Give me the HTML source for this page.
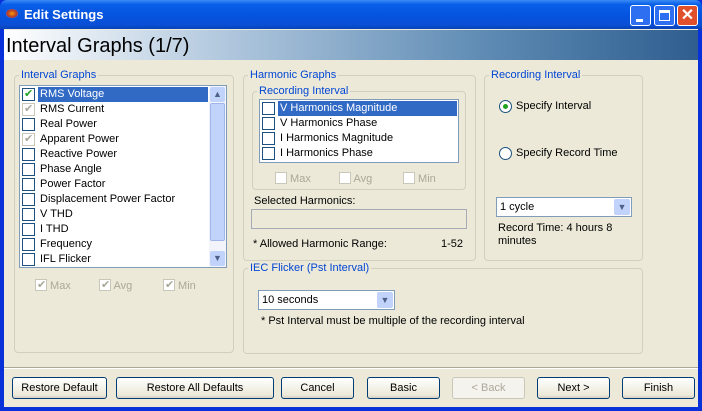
<!DOCTYPE html>
<html><head><style>
*{box-sizing:border-box;margin:0;padding:0}
body{width:702px;height:411px;overflow:hidden;font-family:"Liberation Sans",sans-serif;font-size:11px;background:#0831d9;position:relative}
.a{position:absolute}
.win{left:4px;top:29px;width:694px;height:378px;background:#ece9d8}
.title{left:0;top:0;width:702px;height:29px;background:linear-gradient(#3b8cf5 0%,#0a5fe8 15%,#0554e0 50%,#0a4fd6 85%,#0842b8 100%);border-radius:7px 7px 0 0}
.hdr{left:4px;top:30px;width:694px;height:30px;background:linear-gradient(90deg,#fff 0%,#a9c2da 35%,#5d8ab3 70%,#2f5e8f 100%);font-size:20px;padding:5px 0 0 2px}
.gb{position:absolute;border:1px solid #d0d0bf;border-radius:4px}
.gl{position:absolute;background:#ece9d8;color:#0046d5;padding:0 2px;top:-7px;left:4px;line-height:13px}
.list{position:absolute;background:#fff;border:1px solid #7f9db9}
.row{height:15px;line-height:15px;position:relative;padding-left:18px;white-space:nowrap}
.cb{position:absolute;left:2px;top:1px;width:13px;height:13px;border:1px solid #1c5180;background:#fff}
.cb.dis{border-color:#c9c7ba}
.sel{background:#316ac5;color:#fff}
.btn{position:absolute;top:377px;height:22px;border:1px solid #003c74;border-radius:3px;background:linear-gradient(#fff,#ece9d8 85%,#d6d0c5);text-align:center;line-height:20px}
.tick{color:#21a121;font-size:11px;position:absolute;left:1px;top:-2px}
.g{color:#aca899}
.combo{position:absolute;background:#fff;border:1px solid #7f9db9;height:20px;line-height:18px;padding-left:3px}
.dd{position:absolute;right:1px;top:1px;width:16px;height:16px;background:#c1d3fb;border-radius:2px;color:#4d6185;font-size:9px;text-align:center;line-height:16px}
</style></head><body>
<div class="a title"></div>
<div class="a" style="left:6px;top:9px;width:12px;height:9px;border-radius:50%;background:radial-gradient(#f90,#a33 60%,#fff)"></div>
<div class="a" style="left:24px;top:7px;color:#fff;font-weight:bold;font-size:13px">Edit Settings</div>
<div class="a" style="left:630px;top:5px;width:21px;height:21px;border:1px solid #fff;border-radius:3px;background:#2d6ff0"><div class="a" style="left:5px;top:13px;width:7px;height:3px;background:#fff"></div></div>
<div class="a" style="left:654px;top:5px;width:21px;height:21px;border:1px solid #fff;border-radius:3px;background:#2d6ff0"><div class="a" style="left:4px;top:4px;width:11px;height:11px;border:1px solid #fff;border-top-width:3px"></div></div>
<div class="a" style="left:677px;top:5px;width:21px;height:21px;border:1px solid #fff;border-radius:3px;background:#e0502a;color:#fff;font-size:16px;text-align:center;line-height:19px;font-weight:bold">✕</div>
<div class="a win"></div>
<div class="a hdr">Interval Graphs (1/7)</div>

<div class="gb" style="left:14px;top:75px;width:220px;height:278px"><span class="gl">Interval Graphs</span></div>
<div class="list" style="left:19px;top:85px;width:208px;height:183px">
<div style="position:absolute;left:0;top:1px;width:188px">
<div class="row"><span class="cb"><span class="tick">✔</span></span><span class="sel" style="display:block;margin-left:0;padding-left:2px">RMS Voltage</span></div>
<div class="row" style="padding-left:20px"><span class="cb dis"><span class="tick g">✔</span></span>RMS Current</div>
<div class="row" style="padding-left:20px"><span class="cb"></span>Real Power</div>
<div class="row" style="padding-left:20px"><span class="cb dis"><span class="tick g">✔</span></span>Apparent Power</div>
<div class="row" style="padding-left:20px"><span class="cb"></span>Reactive Power</div>
<div class="row" style="padding-left:20px"><span class="cb"></span>Phase Angle</div>
<div class="row" style="padding-left:20px"><span class="cb"></span>Power Factor</div>
<div class="row" style="padding-left:20px"><span class="cb"></span>Displacement Power Factor</div>
<div class="row" style="padding-left:20px"><span class="cb"></span>V THD</div>
<div class="row" style="padding-left:20px"><span class="cb"></span>I THD</div>
<div class="row" style="padding-left:20px"><span class="cb"></span>Frequency</div>
<div class="row" style="padding-left:20px"><span class="cb"></span>IFL Flicker</div>
</div>
<div class="a" style="right:0;top:0;width:17px;height:181px;background:#f3f4fb"></div>
<div class="a" style="right:1px;top:1px;width:15px;height:15px;background:#c1d3fb;border-radius:2px;color:#4d6185;font-size:9px;text-align:center;line-height:15px">▲</div>
<div class="a" style="right:1px;top:17px;width:15px;height:138px;background:#c1d3fb;border:1px solid #a0b6e8;border-radius:2px"></div>
<div class="a" style="right:1px;bottom:1px;width:15px;height:15px;background:#c1d3fb;border-radius:2px;color:#4d6185;font-size:9px;text-align:center;line-height:15px">▼</div>
</div>
<div class="a g" style="left:35px;top:277px"><span class="cb dis" style="position:relative;display:inline-block;left:0;top:2px;width:12px;height:12px"><span class="tick g">✔</span></span> Max</div>
<div class="a g" style="left:99px;top:277px"><span class="cb dis" style="position:relative;display:inline-block;left:0;top:2px;width:12px;height:12px"><span class="tick g">✔</span></span> Avg</div>
<div class="a g" style="left:163px;top:277px"><span class="cb dis" style="position:relative;display:inline-block;left:0;top:2px;width:12px;height:12px"><span class="tick g">✔</span></span> Min</div>

<div class="gb" style="left:243px;top:75px;width:233px;height:186px"><span class="gl">Harmonic Graphs</span></div>
<div class="gb" style="left:252px;top:91px;width:214px;height:99px"><span class="gl">Recording Interval</span></div>
<div class="list" style="left:259px;top:99px;width:200px;height:64px;padding-top:1px">
<div class="row" style="padding-left:18px"><span class="cb"></span><span class="sel" style="display:block;padding-left:2px;margin-right:1px">V Harmonics Magnitude</span></div>
<div class="row" style="padding-left:20px"><span class="cb"></span>V Harmonics Phase</div>
<div class="row" style="padding-left:20px"><span class="cb"></span>I Harmonics Magnitude</div>
<div class="row" style="padding-left:20px"><span class="cb"></span>I Harmonics Phase</div>
</div>
<div class="a g" style="left:275px;top:170px"><span class="cb dis" style="position:relative;display:inline-block;left:0;top:2px;width:12px;height:12px"></span> Max</div>
<div class="a g" style="left:339px;top:170px"><span class="cb dis" style="position:relative;display:inline-block;left:0;top:2px;width:12px;height:12px"></span> Avg</div>
<div class="a g" style="left:403px;top:170px"><span class="cb dis" style="position:relative;display:inline-block;left:0;top:2px;width:12px;height:12px"></span> Min</div>
<div class="a" style="left:254px;top:195px">Selected Harmonics:</div>
<div class="a" style="left:251px;top:209px;width:216px;height:20px;border:1px solid #a5acb5;background:#ece9d8"></div>
<div class="a" style="left:253px;top:238px">* Allowed Harmonic Range:</div>
<div class="a" style="left:441px;top:238px">1-52</div>

<div class="gb" style="left:484px;top:75px;width:159px;height:186px"><span class="gl">Recording Interval</span></div>
<div class="a" style="left:499px;top:100px;width:13px;height:13px;border-radius:50%;border:1px solid #1c5180;background:#fff"><div class="a" style="left:3px;top:3px;width:5px;height:5px;border-radius:50%;background:#21a121"></div></div>
<div class="a" style="left:516px;top:100px">Specify Interval</div>
<div class="a" style="left:499px;top:147px;width:13px;height:13px;border-radius:50%;border:1px solid #1c5180;background:#fff"></div>
<div class="a" style="left:516px;top:147px">Specify Record Time</div>
<div class="combo" style="left:496px;top:197px;width:136px">1 cycle<div class="dd">▼</div></div>
<div class="a" style="left:498px;top:222px;line-height:13px">Record Time: 4 hours 8<br>minutes</div>

<div class="gb" style="left:243px;top:268px;width:400px;height:86px"><span class="gl">IEC Flicker (Pst Interval)</span></div>
<div class="combo" style="left:258px;top:290px;width:137px">10 seconds<div class="dd">▼</div></div>
<div class="a" style="left:261px;top:315px">* Pst Interval must be multiple of the recording interval</div>

<div class="a" style="left:4px;top:367px;width:694px;height:1px;background:#aca899"></div>
<div class="a" style="left:4px;top:368px;width:694px;height:1px;background:#fff"></div>
<div class="btn" style="left:12px;width:95px">Restore Default</div>
<div class="btn" style="left:116px;width:158px">Restore All Defaults</div>
<div class="btn" style="left:281px;width:73px">Cancel</div>
<div class="btn" style="left:367px;width:73px">Basic</div>
<div class="btn" style="left:452px;width:73px;border-color:#c9c7ba;color:#aca899;background:#f4f3ee">&lt; Back</div>
<div class="btn" style="left:537px;width:73px">Next &gt;</div>
<div class="btn" style="left:622px;width:73px">Finish</div>
</body></html>
